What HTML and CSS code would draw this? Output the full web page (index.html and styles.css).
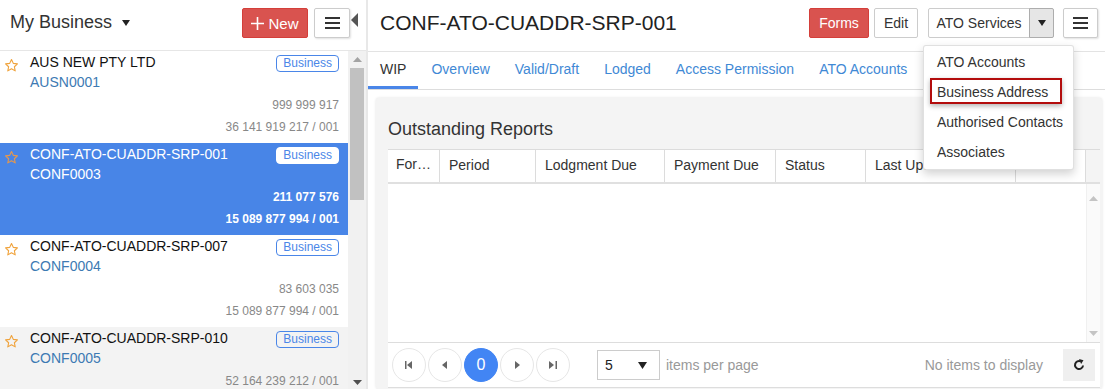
FILE: index.html
```html
<!DOCTYPE html>
<html lang="en">
<head>
    <meta charset="UTF-8">
    <meta name="viewport" content="width=device-width, initial-scale=1.0">
    <title>My Business</title>
    <link rel="stylesheet" href="styles.css">
</head>
<body>
    <div class="app">
        <aside class="sidebar">
            <div class="side-head">
                <span class="side-title">My Business</span>
                <svg class="title-caret" width="8" height="6" viewBox="0 0 8 6"><path d="M0 0h8L4 6z" fill="#222"/></svg>
                <button class="btn btn-red btn-new">
                    <svg width="13" height="13" viewBox="0 0 13 13"><path d="M6.5 0v13M0 6.5h13" stroke="#fff" stroke-width="1.6"/></svg>
                    New
                </button>
                <button class="btn btn-menu"><span></span><span></span><span></span></button>
                <span class="collapse"></span>
            </div>
            <div class="side-body">
                <ul class="list">
                    <li class="item">
                        <svg class="star" width="15" height="15" viewBox="0 0 24 24"><path d="M12 2.5l2.9 6.1 6.6.8-4.9 4.6 1.3 6.6L12 17.3l-5.9 3.3 1.3-6.6-4.9-4.6 6.6-.8z" fill="none" stroke="#f0a33c" stroke-width="1.8" stroke-linejoin="round"/></svg>
                        <div class="item-top">
                            <span class="item-name">AUS NEW PTY LTD</span>
                            <span class="badge">Business</span>
                        </div>
                        <div class="item-code">AUSN0001</div>
                        <div class="item-num">999 999 917</div>
                        <div class="item-num">36 141 919 217 / 001</div>
                    </li>
                    <li class="item selected">
                        <svg class="star" width="15" height="15" viewBox="0 0 24 24"><path d="M12 2.5l2.9 6.1 6.6.8-4.9 4.6 1.3 6.6L12 17.3l-5.9 3.3 1.3-6.6-4.9-4.6 6.6-.8z" fill="none" stroke="#e8984a" stroke-width="1.8" stroke-linejoin="round"/></svg>
                        <div class="item-top">
                            <span class="item-name">CONF-ATO-CUADDR-SRP-001</span>
                            <span class="badge">Business</span>
                        </div>
                        <div class="item-code">CONF0003</div>
                        <div class="item-num">211 077 576</div>
                        <div class="item-num">15 089 877 994 / 001</div>
                    </li>
                    <li class="item">
                        <svg class="star" width="15" height="15" viewBox="0 0 24 24"><path d="M12 2.5l2.9 6.1 6.6.8-4.9 4.6 1.3 6.6L12 17.3l-5.9 3.3 1.3-6.6-4.9-4.6 6.6-.8z" fill="none" stroke="#f0a33c" stroke-width="1.8" stroke-linejoin="round"/></svg>
                        <div class="item-top">
                            <span class="item-name">CONF-ATO-CUADDR-SRP-007</span>
                            <span class="badge">Business</span>
                        </div>
                        <div class="item-code">CONF0004</div>
                        <div class="item-num">83 603 035</div>
                        <div class="item-num">15 089 877 994 / 001</div>
                    </li>
                    <li class="item hover">
                        <svg class="star" width="15" height="15" viewBox="0 0 24 24"><path d="M12 2.5l2.9 6.1 6.6.8-4.9 4.6 1.3 6.6L12 17.3l-5.9 3.3 1.3-6.6-4.9-4.6 6.6-.8z" fill="none" stroke="#f0a33c" stroke-width="1.8" stroke-linejoin="round"/></svg>
                        <div class="item-top">
                            <span class="item-name">CONF-ATO-CUADDR-SRP-010</span>
                            <span class="badge">Business</span>
                        </div>
                        <div class="item-code">CONF0005</div>
                        <div class="item-num">52 164 239 212 / 001</div>
                    </li>
                </ul>
                <div class="vscroll">
                    <svg class="arrow-up" width="9" height="5" viewBox="0 0 9 5"><path d="M0 5h9L4.5 0z" fill="#a3a3a3"/></svg>
                    <div class="thumb"></div>
                    <svg class="arrow-down" width="9" height="5" viewBox="0 0 9 5"><path d="M0 0h9L4.5 5z" fill="#505050"/></svg>
                </div>
            </div>
        </aside>

        <main class="main">
            <div class="main-head">
                <h1 class="main-title">CONF-ATO-CUADDR-SRP-001</h1>
                <button class="btn btn-red btn-forms">Forms</button>
                <button class="btn btn-default btn-edit">Edit</button>
                <div class="split">
                    <button class="btn btn-default split-main">ATO Services</button>
                    <button class="btn btn-default split-caret"><svg width="8" height="6" viewBox="0 0 8 6"><path d="M0 0h8L4 6z" fill="#222"/></svg></button>
                </div>
                <button class="btn btn-menu"><span></span><span></span><span></span></button>
            </div>

            <nav class="tabs">
                <a class="tab active">WIP</a>
                <a class="tab">Overview</a>
                <a class="tab">Valid/Draft</a>
                <a class="tab">Lodged</a>
                <a class="tab">Access Permission</a>
                <a class="tab">ATO Accounts</a>
            </nav>

            <div class="content">
                <section class="panel">
                    <h2 class="panel-title">Outstanding Reports</h2>
                    <div class="grid">
                        <div class="grid-head">
                            <div class="col c1">For…</div>
                            <div class="col c2">Period</div>
                            <div class="col c3">Lodgment Due</div>
                            <div class="col c4">Payment Due</div>
                            <div class="col c5">Status</div>
                            <div class="col c6">Last Updated</div>
                            <div class="col c7"></div>
                        </div>
                        <div class="grid-body">
                            <div class="grid-rows"></div>
                            <div class="grid-scroll">
                                <svg width="9" height="5" viewBox="0 0 9 5"><path d="M0 5h9L4.5 0z" fill="#c4c4c4"/></svg>
                                <svg width="9" height="5" viewBox="0 0 9 5"><path d="M0 0h9L4.5 5z" fill="#c4c4c4"/></svg>
                            </div>
                        </div>
                        <div class="pager">
                            <button class="page-btn"><svg width="8" height="8" viewBox="0 0 8 8"><path d="M0 0h1.5v8H0zM7 0v8L2 4z" fill="#666"/></svg></button>
                            <button class="page-btn"><svg width="6" height="8" viewBox="0 0 6 8"><path d="M5 0v8L0 4z" fill="#666"/></svg></button>
                            <button class="page-btn current">0</button>
                            <button class="page-btn"><svg width="6" height="8" viewBox="0 0 6 8"><path d="M1 0v8l5-4z" fill="#666"/></svg></button>
                            <button class="page-btn"><svg width="8" height="8" viewBox="0 0 8 8"><path d="M0 0v8l5-4zM6.5 0H8v8H6.5z" fill="#666"/></svg></button>
                            <div class="page-size">
                                <span>5</span>
                                <svg width="9" height="7" viewBox="0 0 9 7"><path d="M0 0h9L4.5 7z" fill="#222"/></svg>
                            </div>
                            <span class="pager-label">items per page</span>
                            <span class="pager-info">No items to display</span>
                            <button class="refresh">
                                <svg width="12" height="12" viewBox="0 0 12 12"><path d="M10 6.5A4 4 0 1 1 7.6 2.4" fill="none" stroke="#222" stroke-width="2"/><path d="M6 0l4.5 1.2-2.4 3.8z" fill="#222"/></svg>
                            </button>
                        </div>
                    </div>
                </section>
            </div>

            <div class="dropdown">
                <a class="dd-item">ATO Accounts</a>
                <a class="dd-item focused">Business Address</a>
                <a class="dd-item">Authorised Contacts</a>
                <a class="dd-item">Associates</a>
            </div>
        </main>
    </div>
</body>
</html>
```

FILE: styles.css
```css
* {
    box-sizing: border-box;
}

body {
    margin: 0;
    width: 1105px;
    height: 389px;
    overflow: hidden;
    font-family: "Liberation Sans", Arial, sans-serif;
    font-size: 14px;
    color: #333;
    background-color: #fff;
}

.app {
    display: flex;
    height: 389px;
}

/* ---------- buttons ---------- */

.btn {
    font-family: inherit;
    font-size: 14px;
    height: 30px;
    padding: 0 10px;
    border: 1px solid transparent;
    border-radius: 2px;
    cursor: pointer;
    display: flex;
    align-items: center;
    justify-content: center;
}

.btn-red {
    background-color: #d9534f;
    border-color: #d43f3a;
    color: #fff;
}

.btn-default {
    background-color: #fff;
    border-color: #ccc;
    color: #333;
}

.btn-menu {
    width: 36px;
    padding: 0;
    background-color: #fff;
    border: 1px solid #ccc;
    flex-direction: column;
    gap: 3px;
    box-shadow: 1px 1px 2px rgba(0, 0, 0, 0.12);
}

.btn-menu span {
    display: block;
    width: 15px;
    height: 2px;
    background-color: #333;
}

/* ---------- sidebar ---------- */

.sidebar {
    width: 368px;
    flex-shrink: 0;
    border-right: 2px solid #e8e8e8;
    display: flex;
    flex-direction: column;
}

.side-head {
    height: 51px;
    display: flex;
    align-items: flex-start;
    padding: 8px 8px 0 10px;
    border-bottom: 1px solid #e6e6e6;
}

.side-title {
    font-size: 18px;
    color: #333;
    line-height: 29px;
}

.title-caret {
    margin: 12px 0 0 10px;
}

.btn-new {
    margin-left: auto;
    width: 66px;
    padding: 0;
    gap: 4px;
    font-size: 15px;
}

.side-head .btn-menu {
    margin-left: 6px;
    width: 36px;
}

.collapse {
    width: 0;
    height: 0;
    margin: 5px 0 0 1px;
    border-top: 7.5px solid transparent;
    border-bottom: 7.5px solid transparent;
    border-right: 7px solid #555;
}

.side-body {
    flex: 1;
    display: flex;
    overflow: hidden;
}

.list {
    list-style: none;
    margin: 0;
    padding: 0;
    flex: 1;
    overflow: hidden;
}

.item {
    position: relative;
    height: 92px;
    padding: 1px 9px 5px 30px;
}

.item.selected {
    background-color: #4885e7;
    color: #fff;
}

.item.hover {
    background-color: #f3f3f3;
}

.star {
    position: absolute;
    left: 4px;
    top: 7px;
}

.item-top {
    display: flex;
    justify-content: space-between;
    align-items: flex-start;
}

.item-name {
    font-size: 14px;
    line-height: 20px;
    color: #111;
}

.badge {
    margin-top: 3px;
    height: 17px;
    line-height: 15px;
    padding: 0 6px;
    font-size: 12px;
    color: #4a86e8;
    border: 1px solid #4a86e8;
    border-radius: 4px;
}

.item-code {
    font-size: 14px;
    line-height: 20px;
    color: #3d7ab3;
}

.item-num {
    font-size: 12px;
    line-height: 22px;
    color: #888;
    text-align: right;
}

.item-code + .item-num {
    margin-top: 2px;
}

.item.selected .item-name,
.item.selected .item-code {
    color: #fff;
}

.item.selected .item-num {
    color: #fff;
    font-weight: bold;
}

.item.selected .badge {
    background-color: #fff;
    border-color: #fff;
}

.vscroll {
    width: 18px;
    flex-shrink: 0;
    background-color: #f1f1f1;
    position: relative;
}

.arrow-up {
    position: absolute;
    left: 5px;
    top: 6px;
}

.arrow-down {
    position: absolute;
    left: 5px;
    bottom: 4px;
}

.thumb {
    position: absolute;
    left: 2px;
    right: 2px;
    top: 17px;
    height: 132px;
    background-color: #c1c1c1;
}

/* ---------- main ---------- */

.main {
    flex: 1;
    position: relative;
    display: flex;
    flex-direction: column;
    min-width: 0;
}

.main-head {
    height: 52px;
    display: flex;
    align-items: flex-start;
    padding: 8px 7px 0 12px;
    border-bottom: 1px solid #e3e3e3;
}

.main-title {
    margin: 0;
    font-size: 21px;
    font-weight: normal;
    line-height: 30px;
    color: #222;
    flex: 1;
}

.btn-forms {
    width: 60px;
    padding: 0;
}

.btn-edit {
    margin-left: 5px;
    width: 44px;
    padding: 0;
}

.split {
    display: flex;
    margin-left: 10px;
}

.split-main {
    width: 102px;
    padding: 0;
    border-radius: 2px 0 0 2px;
}

.split-caret {
    width: 25px;
    padding: 0;
    margin-left: -1px;
    background-color: #e6e6e6;
    border-color: #adadad;
    border-radius: 0 2px 2px 0;
}

.main-head .btn-menu {
    margin-left: 9px;
    width: 35px;
}

.tabs {
    height: 38px;
    display: flex;
    border-bottom: 1px solid #ddd;
}

.tab {
    padding: 0 12px;
    line-height: 34px;
    border-bottom: 3px solid transparent;
    color: #3f89d5;
    font-size: 14px;
}

.tab + .tab {
    margin-left: 1px;
}

.tab.active {
    color: #333;
    border-bottom-color: #4a86e8;
}

.content {
    flex: 1;
    padding: 8px 3px 0 8px;
    overflow: hidden;
}

.panel {
    height: 100%;
    background-color: #f4f4f4;
    border-radius: 3px;
    box-shadow: 0 0 3px rgba(0, 0, 0, 0.12);
    padding: 20px 2px 0 12px;
}

.panel-title {
    margin: 0 0 9px;
    font-size: 18px;
    font-weight: normal;
    line-height: 22px;
    color: #333;
}

.grid {
    background-color: #fff;
}

.grid-head {
    display: flex;
    height: 35px;
    border-top: 1px solid #dcdcdc;
    border-bottom: 2px solid #e0e0e0;
    padding-right: 14px;
    background-color: #f4f4f4;
}

.col {
    background-color: #fff;
    border-left: 1px solid #dcdcdc;
    padding: 0 9px;
    line-height: 31px;
    white-space: nowrap;
    overflow: hidden;
}

.col:first-child {
    border-left: 0;
    padding: 0 8px;
    line-height: 28px;
}

.col:last-child {
    border-right: 1px solid #dcdcdc;
}

.c1 { width: 51px; }
.c2 { width: 96px; }
.c3 { width: 129px; }
.c4 { width: 111px; }
.c5 { width: 90px; }
.c6 { width: 150px; }
.c7 { width: 71px; }

.grid-body {
    height: 158px;
    display: flex;
}

.grid-rows {
    flex: 1;
}

.grid-scroll {
    width: 14px;
    background-color: #fafafa;
    border-left: 1px solid #f0f0f0;
    display: flex;
    flex-direction: column;
    justify-content: space-between;
    align-items: center;
    padding: 12px 0 6px;
}

.pager {
    height: 46px;
    display: flex;
    align-items: center;
    padding: 0 5px 0 4px;
    border-top: 1px solid #ddd;
    border-bottom: 1px solid #ddd;
}

.page-btn {
    width: 34px;
    height: 34px;
    margin-right: 2px;
    border: 1px solid #e6e6e6;
    border-radius: 50%;
    background-color: #fff;
    display: flex;
    align-items: center;
    justify-content: center;
    font-family: inherit;
    font-size: 16px;
    padding: 0;
}

.page-btn.current {
    background-color: #4285f4;
    border-color: #4285f4;
    color: #fff;
}

.page-size {
    margin-left: 25px;
    width: 63px;
    height: 30px;
    border: 1px solid #ccc;
    display: flex;
    align-items: center;
    justify-content: space-between;
    padding: 0 12px 0 7px;
    font-size: 14px;
    color: #222;
}

.pager-label {
    margin-left: 6px;
    color: #999;
}

.pager-info {
    margin-left: auto;
    margin-right: 20px;
    color: #999;
}

.refresh {
    width: 32px;
    height: 32px;
    border: 0;
    background-color: #efefef;
    display: flex;
    align-items: center;
    justify-content: center;
    padding: 0;
}

/* ---------- dropdown ---------- */

.dropdown {
    position: absolute;
    left: 555px;
    top: 45px;
    width: 151px;
    padding: 2px 0 5px;
    background-color: #fff;
    border: 1px solid rgba(0, 0, 0, 0.12);
    border-radius: 3px;
    box-shadow: 0 4px 10px rgba(0, 0, 0, 0.18);
}

.dd-item {
    display: block;
    height: 26px;
    line-height: 28px;
    margin: 0 11px 4px 6px;
    padding-left: 7px;
    color: #333;
    font-size: 14px;
    white-space: nowrap;
}

.dd-item:last-child {
    margin-bottom: 0;
}

.dd-item.focused {
    border: 2px solid #b30d0d;
    padding-left: 5px;
    line-height: 24px;
    box-shadow: 0 2px 5px rgba(0, 0, 0, 0.3);
}
```
